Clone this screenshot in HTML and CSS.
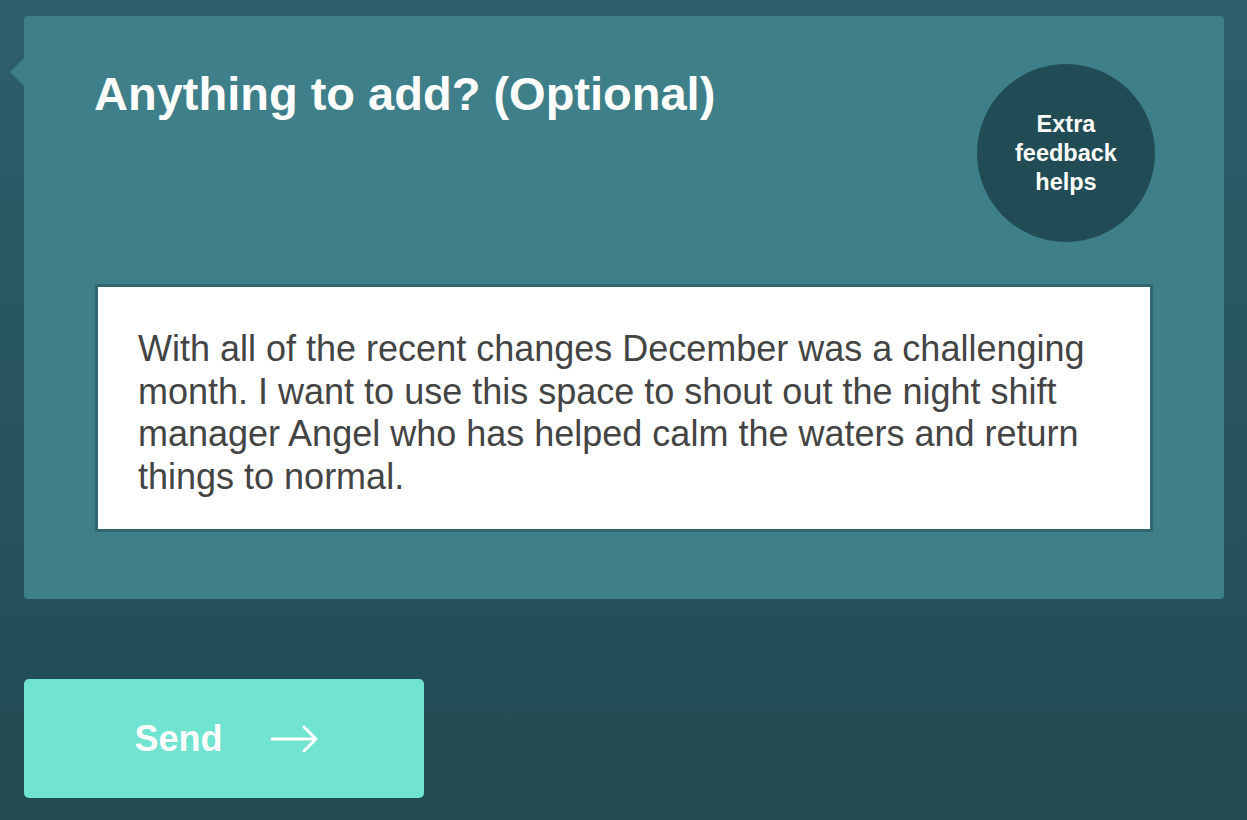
FILE: index.html
```html
<!DOCTYPE html>
<html>
<head>
<meta charset="utf-8">
<link rel="stylesheet" href="styles.css">
</head>
<body>
<div class="page">
  <section class="card">
    <div class="card-head">
      <h1 class="title">Anything to add? (Optional)</h1>
      <div class="badge">Extra<br>feedback<br>helps</div>
    </div>
    <div class="answer">With all of the recent changes December was a challenging month. I want to use this space to shout out the night shift manager Angel who has helped calm the waters and return things to normal.</div>
  </section>
  <button class="send">
    <span>Send</span>
    <svg class="arrow" width="50" height="30" viewBox="0 0 50 30"><path d="M2 15 H46 M34 3 L46 15 L34 27" fill="none" stroke="#fff" stroke-width="3" stroke-linecap="round" stroke-linejoin="round"/></svg>
  </button>
</div>
</body>
</html>
```
FILE: styles.css
```css
html, body { margin: 0; padding: 0; }
body {
  width: 1247px;
  height: 820px;
  overflow: hidden;
  background: linear-gradient(180deg, #2d5f6a 0%, #224a53 100%);
  font-family: "Liberation Sans", Arial, sans-serif;
}
.page {
  padding: 16px 23px 0 24px;
  display: flex;
  flex-direction: column;
  align-items: flex-start;
}
.card {
  position: relative;
  box-sizing: border-box;
  width: 1200px;
  height: 583px;
  background: #3e7f8a;
  border-radius: 4px;
  padding: 48px 70px 0 70px;
}
.card::before {
  content: "";
  position: absolute;
  left: -14px;
  top: 42px;
  border-style: solid;
  border-width: 14px 14px 14px 0;
  border-color: transparent #3e7f8a transparent transparent;
}
.card-head {
  display: flex;
  justify-content: space-between;
  align-items: flex-start;
  height: 220px;
}
.title {
  margin: 0;
  color: #fff;
  font-size: 47px;
  font-weight: bold;
  line-height: 60px;
  margin-top: 0;
}
.badge {
  width: 178px;
  height: 178px;
  border-radius: 50%;
  background: #224c55;
  color: #fff;
  font-weight: bold;
  font-size: 23.5px;
  line-height: 29px;
  display: flex;
  align-items: center;
  justify-content: center;
  text-align: center;
  margin-top: 0;
  margin-right: -1px;
}
.answer {
  box-sizing: border-box;
  width: 1058px;
  height: 248px;
  margin-left: 1px;
  background: #fff;
  border: 3px solid #2f6670;
  border-radius: 3px;
  padding: 41px 40px 0 40px;
  color: #444;
  font-size: 36px;
  line-height: 42.5px;
}
.send {
  margin-top: 80px;
  width: 400px;
  height: 119px;
  background: #70e3d1;
  border: none;
  border-radius: 5px;
  color: #fff;
  font-family: "Liberation Sans", Arial, sans-serif;
  font-weight: bold;
  font-size: 36px;
  display: flex;
  align-items: center;
  justify-content: center;
  gap: 47px;
  padding: 0 0 0 6px;
}
.arrow { display: block; }
```
